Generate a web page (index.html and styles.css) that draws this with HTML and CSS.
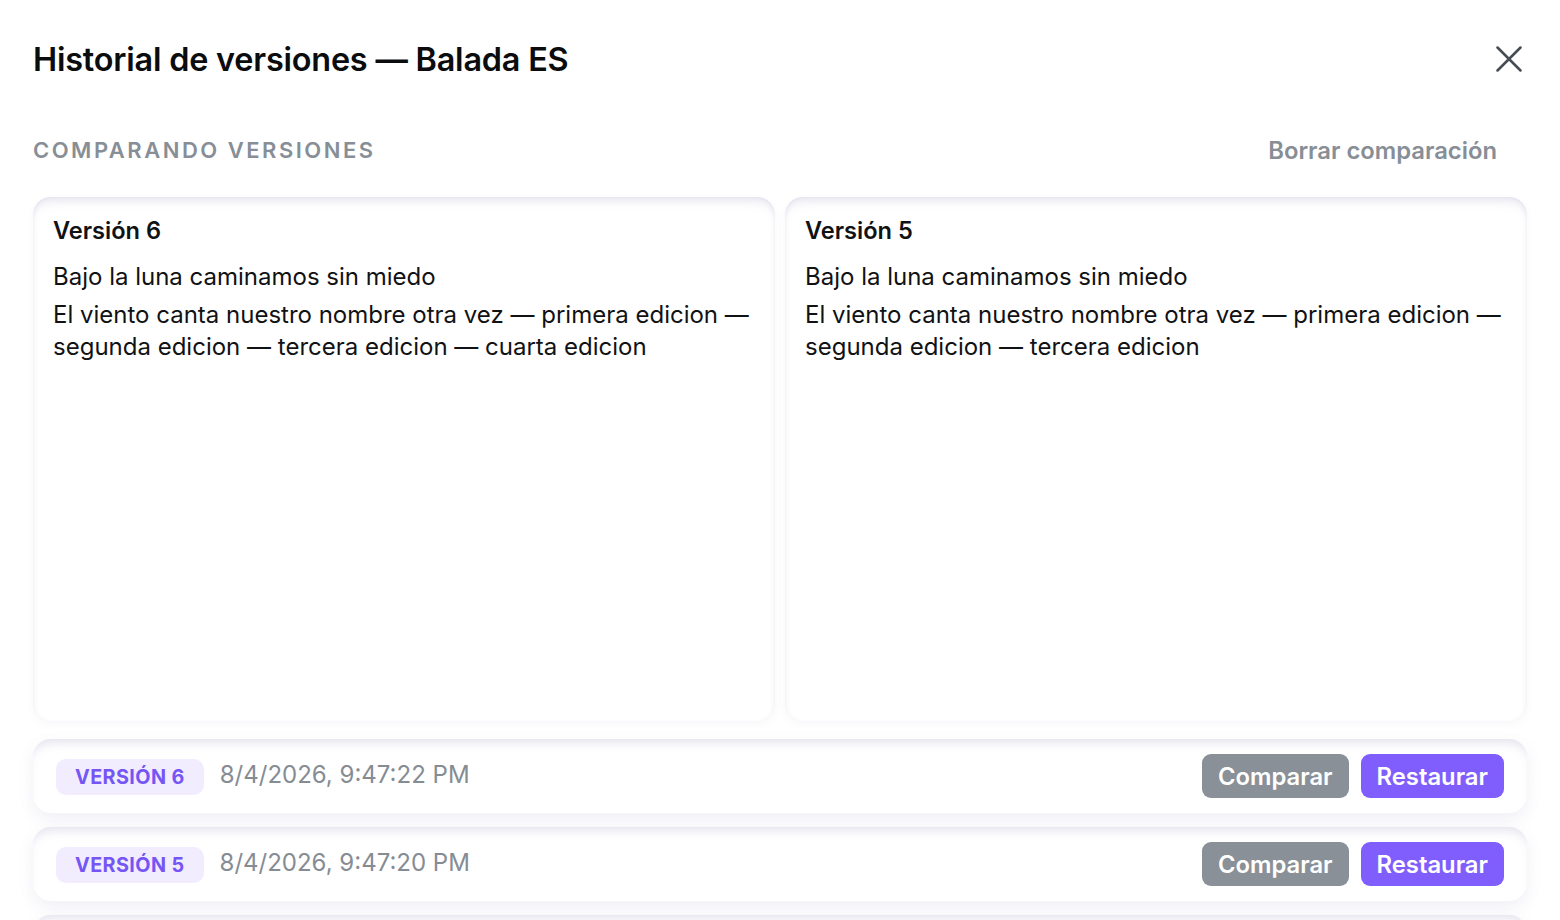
FILE: index.html
```html
<!DOCTYPE html>
<html lang="es">
<head>
<meta charset="utf-8">
<title>Historial de versiones</title>
<link rel="stylesheet" href="styles.css">
</head>
<body>
<div class="modal">
  <header class="modal-header">
    <h1 class="modal-title">Historial de versiones — Balada ES</h1>
    <button class="close-btn" aria-label="Cerrar">
      <svg width="26" height="26" viewBox="0 0 26 26" fill="none" stroke="#454c54" stroke-width="2.5" stroke-linecap="round"><path d="M1.5 1.5 L24.5 24.5 M24.5 1.5 L1.5 24.5"/></svg>
    </button>
  </header>

  <div class="compare-head">
    <span class="compare-label">Comparando versiones</span>
    <button class="clear-btn">Borrar comparación</button>
  </div>

  <div class="compare-grid">
    <section class="panel">
      <h2 class="panel-title">Versión 6</h2>
      <p class="panel-line">Bajo la luna caminamos sin miedo</p>
      <p class="panel-line">El viento canta nuestro nombre otra vez — primera edicion — segunda edicion — tercera edicion — cuarta edicion</p>
    </section>
    <section class="panel">
      <h2 class="panel-title">Versión 5</h2>
      <p class="panel-line">Bajo la luna caminamos sin miedo</p>
      <p class="panel-line">El viento canta nuestro nombre otra vez — primera edicion — segunda edicion — tercera edicion</p>
    </section>
  </div>

  <div class="version-list">
    <div class="version-row">
      <span class="badge">Versión 6</span>
      <span class="date">8/4/2026, 9:47:22 PM</span>
      <div class="actions">
        <button class="btn btn-gray">Comparar</button>
        <button class="btn btn-purple">Restaurar</button>
      </div>
    </div>
    <div class="version-row">
      <span class="badge">Versión 5</span>
      <span class="date">8/4/2026, 9:47:20 PM</span>
      <div class="actions">
        <button class="btn btn-gray">Comparar</button>
        <button class="btn btn-purple">Restaurar</button>
      </div>
    </div>
    <div class="version-row">
      <span class="badge">Versión 4</span>
      <span class="date">8/4/2026, 9:47:18 PM</span>
      <div class="actions">
        <button class="btn btn-gray">Comparar</button>
        <button class="btn btn-purple">Restaurar</button>
      </div>
    </div>
  </div>
</div>
</body>
</html>
```

FILE: styles.css
```css
* { box-sizing: border-box; }
html, body {
  margin: 0;
  height: 100%;
  overflow: hidden;
  background: #ffffff;
}
body {
  font-family: Inter, "Noto Sans", sans-serif;
  color: #111214;
}
.modal {
  padding: 38px 33px 0 33px;
}
.modal-header {
  display: flex;
  justify-content: space-between;
  align-items: center;
  height: 42px;
}
.modal-title {
  margin: 0;
  font-size: 32.4px;
  font-weight: 600;
  letter-spacing: -0.2px;
  color: #0b0c0e;
}
.close-btn {
  border: 0;
  background: none;
  padding: 0;
  margin-right: 5px;
  width: 26px;
  height: 26px;
  display: flex;
}
.compare-head {
  display: flex;
  justify-content: space-between;
  align-items: center;
  margin-top: 57px;
  padding-right: 30px;
  height: 26px;
}
.compare-label {
  text-transform: uppercase;
  font-size: 22px;
  font-weight: 600;
  letter-spacing: 2.5px;
  color: #878e96;
}
.clear-btn {
  border: 0;
  background: none;
  padding: 0;
  font-family: inherit;
  font-size: 23.8px;
  font-weight: 600;
  color: #878e96;
}
.compare-grid {
  display: grid;
  grid-template-columns: 1fr 1fr;
  gap: 10px;
  margin-top: 34px;
  height: 524px;
}
.panel {
  border-radius: 18px;
  background: #ffffff;
  padding: 18px 20px;
  box-shadow: inset 0 9px 11px -6px rgba(105, 100, 160, 0.2),
              inset 3px 0 5px -3px rgba(105, 100, 160, 0.09),
              inset -3px 0 5px -3px rgba(105, 100, 160, 0.09),
              0 3px 8px rgba(105, 100, 160, 0.05);
}
.panel-title {
  margin: 0 0 14px 0;
  font-size: 23.6px;
  font-weight: 600;
  line-height: 32px;
}
.panel-line {
  margin: 0 0 6px 0;
  font-size: 24px;
  line-height: 32px;
  font-weight: 400;
  color: #111214;
}
.version-list {
  display: flex;
  flex-direction: column;
  gap: 14px;
  margin-top: 18px;
}
.version-row {
  display: flex;
  align-items: center;
  height: 74px;
  padding: 0 23px;
  border-radius: 18px;
  background: #ffffff;
  box-shadow: inset 0 9px 11px -6px rgba(105, 100, 160, 0.2),
              0 6px 16px rgba(105, 100, 160, 0.1);
}
.badge {
  display: inline-flex;
  align-items: center;
  height: 36px;
  padding: 0 19px;
  border-radius: 10px;
  background: #f1edff;
  color: #7556f5;
  font-size: 19.8px;
  font-weight: 700;
  letter-spacing: 0.4px;
  text-transform: uppercase;
  margin-top: 2px;
}
.date {
  margin-left: 16px;
  font-size: 24px;
  color: #858c94;
  margin-top: -4px;
}
.actions {
  margin-left: auto;
  display: flex;
  gap: 12px;
}
.btn {
  border: 0;
  height: 44px;
  padding: 0 16px;
  border-radius: 9px;
  font-family: inherit;
  font-size: 23.8px;
  font-weight: 600;
  color: #ffffff;
}
.btn-gray { background: #899097; }
.btn-purple { background: #7f5efd; }
```
